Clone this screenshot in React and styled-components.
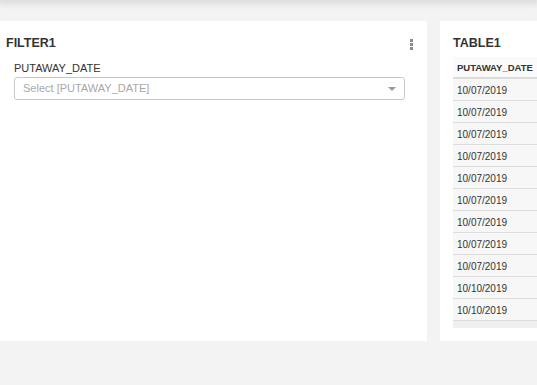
import React from 'react'
import styled, { createGlobalStyle } from 'styled-components'

const GlobalStyle = createGlobalStyle`
    html, body {
        margin: 0;
        padding: 0;
        background: #f3f3f3;
        font-family: "Liberation Sans", Arial, sans-serif;
        overflow: hidden;
    }
`

const Page = styled.div`
    width: 537px;
    height: 385px;
    background: #f3f3f3;
    overflow: hidden;
`

const TopShadow = styled.div`
    height: 0;
    box-shadow: 0 0 7px 3px rgba(0, 0, 0, 0.13);
`

const Board = styled.div`
    display: flex;
    gap: 13px;
    padding-top: 21px;
`

const Panel = styled.div`
    background: #fff;
    height: 320px;
    box-sizing: border-box;
    flex: 0 0 ${p => p.width}px;
    padding: 14px 0 0 ${p => p.padLeft}px;
    overflow: hidden;
`

const PanelHead = styled.div`
    display: flex;
    align-items: center;
    justify-content: space-between;
    height: 16px;
    padding-right: 14px;
`

const Title = styled.span`
    font-size: 12.5px;
    line-height: 16px;
    color: #333;
    font-weight: 600;
`

const Kebab = styled.span`
    display: flex;
    flex-direction: column;
    gap: 1px;
    margin-top: 2px;
    span {
        width: 3px;
        height: 3px;
        background: #8a8a8a;
    }
`

const FieldLabel = styled.div`
    margin: 11px 0 2px 8px;
    font-size: 11px;
    line-height: 13px;
    color: #333;
`

const Select = styled.div`
    margin-left: 8px;
    width: 391px;
    height: 23px;
    box-sizing: border-box;
    border: 1px solid #c8c8c8;
    border-radius: 3px;
    display: flex;
    align-items: center;
    justify-content: space-between;
    padding: 0 8px 1px 8px;
    font-size: 11px;
    color: #a8a8a8;
`

const Caret = styled.span`
    width: 0;
    height: 0;
    border-left: 4px solid transparent;
    border-right: 4px solid transparent;
    border-top: 4px solid #999;
    margin-top: 1px;
`

const Table = styled.div`
    margin-top: 6px;
    width: 120px;
`

const HeadCell = styled.div`
    height: 20px;
    line-height: 21px;
    padding-left: 4px;
    font-size: 9.5px;
    font-weight: bold;
    color: #333;
    background: #fafafa;
    border-bottom: 2px solid #dcdcdc;
`

const Cell = styled.div`
    height: 21px;
    line-height: 23px;
    padding-left: 4px;
    font-size: 10px;
    color: #333;
    background: #f7f7f7;
    border-bottom: 1px solid #dcdcdc;
`

const ScrollStrip = styled.div`
    height: 7px;
    background: #efefef;
`

const dates = [
    '10/07/2019', '10/07/2019', '10/07/2019', '10/07/2019', '10/07/2019',
    '10/07/2019', '10/07/2019', '10/07/2019', '10/07/2019', '10/10/2019', '10/10/2019',
]

const App = () => (
    <Page>
        <GlobalStyle />
        <TopShadow />
        <Board>
            <Panel width={427} padLeft={6}>
                <PanelHead>
                    <Title>FILTER1</Title>
                    <Kebab><span /><span /><span /></Kebab>
                </PanelHead>
                <FieldLabel>PUTAWAY_DATE</FieldLabel>
                <Select>
                    <span>Select [PUTAWAY_DATE]</span>
                    <Caret />
                </Select>
            </Panel>
            <Panel width={130} padLeft={13}>
                <PanelHead>
                    <Title>TABLE1</Title>
                </PanelHead>
                <Table>
                    <HeadCell>PUTAWAY_DATE</HeadCell>
                    {dates.map((d, i) => <Cell key={i}>{d}</Cell>)}
                    <ScrollStrip />
                </Table>
            </Panel>
        </Board>
    </Page>
)

export default App
